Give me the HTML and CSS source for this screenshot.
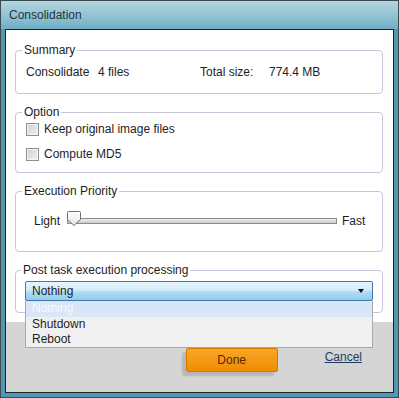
FILE: index.html
```html
<!DOCTYPE html>
<html lang="en">
  <head>
    <meta charset="UTF-8" />
    <title>Consolidation</title>
    <link rel="stylesheet" href="styles.css">
  </head>
  <body>
    <div class="window">
      <div class="titlebar">Consolidation</div>
      <div class="client">
        <div class="panel">
          <fieldset class="group group-summary">
            <legend>Summary</legend>
            <div class="summary-row">
              <span class="sum-label">Consolidate</span>
              <span class="sum-files">4 files</span>
              <span class="sum-size-label">Total size:</span>
              <span>774.4 MB</span>
            </div>
          </fieldset>

          <fieldset class="group group-option">
            <legend>Option</legend>
            <label class="check-row"><span class="check"></span>Keep original image files</label>
            <label class="check-row"><span class="check"></span>Compute MD5</label>
          </fieldset>

          <fieldset class="group group-priority">
            <legend>Execution Priority</legend>
            <div class="slider-row">
              <span class="slider-label">Light</span>
              <div class="slider">
                <div class="track"></div>
                <svg class="thumb" width="16" height="17" viewBox="0 0 16 17">
                  <defs>
                    <linearGradient id="tg" x1="0" y1="0" x2="0" y2="1">
                      <stop offset="0" stop-color="#ffffff" />
                      <stop offset="1" stop-color="#e4e4e4" />
                    </linearGradient>
                  </defs>
                  <path d="M1.5 2.5 Q1.5 1.5 2.5 1.5 H13.5 Q14.5 1.5 14.5 2.5 V9.5 L8 15.5 L1.5 9.5 Z"
                        fill="url(#tg)" stroke="#6f6f6f" stroke-width="1" />
                </svg>
              </div>
              <span class="slider-label">Fast</span>
            </div>
          </fieldset>

          <fieldset class="group group-post">
            <legend>Post task execution processing</legend>
            <div class="select">
              <span>Nothing</span>
              <span class="arrow"></span>
              <ul class="dropdown">
                <li class="selected">Nothing</li>
                <li>Shutdown</li>
                <li>Reboot</li>
              </ul>
            </div>
          </fieldset>
        </div>

        <div class="footer">
          <button class="btn-done">Done</button>
          <a class="link-cancel" href="#">Cancel</a>
        </div>
      </div>
    </div>
  </body>
</html>
```

FILE: styles.css
```css
body {
  margin: 0;
  font-family: "Liberation Sans", Arial, sans-serif;
  font-size: 12px;
  color: #1e1e1e;
}
.window {
  width: 399px;
  height: 398px;
  box-sizing: border-box;
  border: 1px solid #3c4a50;
  background: #4f9ab2;
  padding: 0 4px 4px 4px;
  display: flex;
  flex-direction: column;
}
.titlebar {
  height: 28px;
  line-height: 28px;
  margin: 0 -4px;
  padding-left: 8px;
  background: linear-gradient(#b4d6e0, #8cc0d0 60%, #6fafc4);
  color: #1d3441;
}
.client {
  flex: 1;
  border: 1px solid #1b2226;
  display: flex;
  flex-direction: column;
  background: #d5d5d5;
}
.panel {
  height: 292px;
  box-sizing: border-box;
  background: #ffffff;
  padding-top: 12px;
  display: flex;
  flex-direction: column;
  gap: 10px;
}
.group {
  margin: 0 10px 0 9px;
  border: 1px solid #c8c5d9;
  border-radius: 4px;
  padding: 0 10px;
  min-width: 0;
}
.group legend {
  margin-left: -4px;
  padding: 0 2px;
  line-height: 16px;
}
.group-summary {
  padding-top: 6px;
  padding-bottom: 13px;
}
.summary-row {
  display: flex;
  line-height: 16px;
}
.sum-label {
  width: 72px;
}
.sum-files {
  width: 102px;
}
.sum-size-label {
  width: 69px;
}
.group-option {
  padding-top: 1px;
  padding-bottom: 10px;
  display: flex;
  flex-direction: column;
  gap: 9px;
}
.check-row {
  display: flex;
  align-items: center;
  gap: 5px;
  line-height: 16px;
  height: 16px;
}
.check {
  width: 11px;
  height: 11px;
  border: 1px solid #8e8f8f;
  box-shadow: inset 0 0 0 1px #f4f4f4;
  background: linear-gradient(135deg, #cfcfcf, #f2f2f2);
}
.group-priority {
  padding-top: 14px;
  padding-bottom: 22px;
}
.slider-row {
  display: flex;
  align-items: center;
  height: 16px;
  padding-left: 8px;
}
.slider {
  position: relative;
  width: 271px;
  height: 16px;
  margin: 0 5px 0 6px;
}
.track {
  position: absolute;
  left: 1px;
  right: 0;
  top: 5px;
  height: 4px;
  border: 1px solid #8c8c8c;
  background: linear-gradient(#f0f0f0, #c9c9c9);
}
.thumb {
  position: absolute;
  left: 0;
  top: -3px;
}
.group-post {
  padding: 3px 9px 11px 9px;
}
.select {
  position: relative;
  height: 18px;
  border: 1px solid #3c7aa8;
  border-radius: 2px;
  background: linear-gradient(#e6f5fd, #d2ecfa 45%, #b0dcf4 55%, #92cbec);
  display: flex;
  align-items: center;
  justify-content: space-between;
  padding: 0 8px 0 6px;
}
.arrow {
  width: 0;
  height: 0;
  border-left: 3px solid transparent;
  border-right: 3px solid transparent;
  border-top: 4px solid #111;
}
.dropdown {
  position: absolute;
  left: -1px;
  right: -1px;
  top: 19px;
  margin: 0;
  padding: 0;
  list-style: none;
  background: #f0f0f0;
  border: 1px solid #a8a8a8;
  border-top: none;
  z-index: 2;
}
.dropdown li {
  height: 15px;
  line-height: 15px;
  padding-left: 6px;
}
.dropdown li.selected {
  height: 16px;
  background: #d8e6f8;
  color: #f4f8ff;
}
.footer {
  flex: 1;
  display: flex;
  align-items: center;
  justify-content: flex-end;
  gap: 47px;
  padding: 0 31px 0 0;
}
.btn-done {
  width: 92px;
  height: 24px;
  margin-top: 5px;
  border: 1px solid #d07a00;
  border-radius: 2px;
  background: linear-gradient(#f8a628, #ef8c02);
  color: #5a2500;
  font-family: inherit;
  font-size: 12px;
  box-shadow: -4px 4px 2px rgba(0, 0, 0, 0.14);
}
.link-cancel {
  color: #1d3a66;
  text-decoration: underline;
}
```
